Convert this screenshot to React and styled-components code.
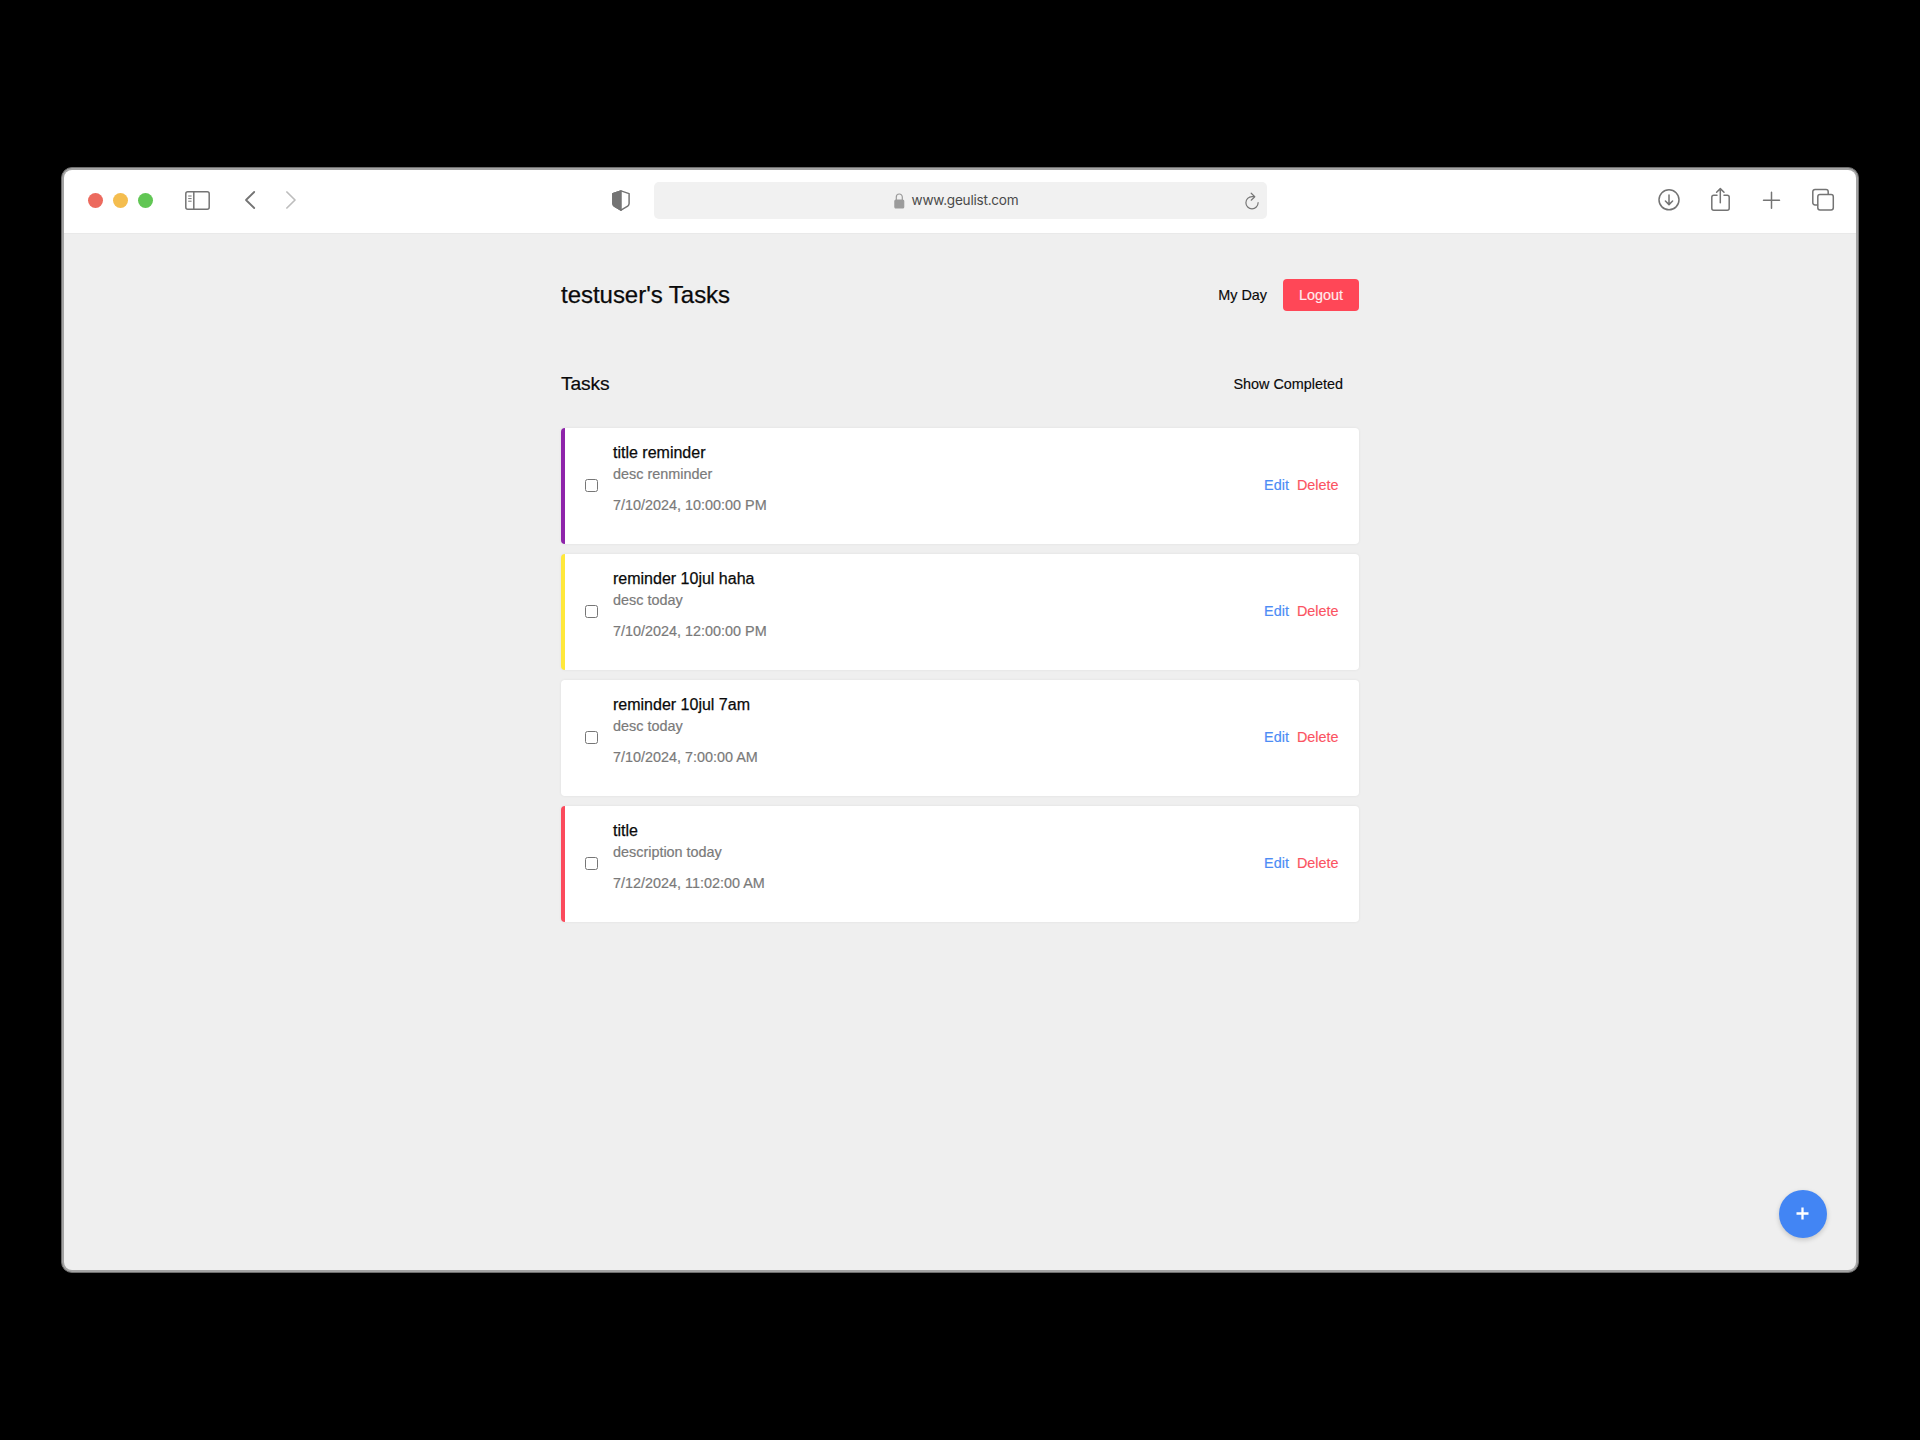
import React from "react";
import styled, { createGlobalStyle } from "styled-components";

const Global = createGlobalStyle`
  *, *::before, *::after { box-sizing: border-box; }
  html, body { margin: 0; background: #000; }
  body { font-family: "Liberation Sans", Arial, sans-serif; color: #0a0a0a; }
  h1, h2, h3, p { margin: 0; font-weight: 400; }
`;

const Desktop = styled.div`
  width: 1920px;
  height: 1440px;
  padding: 167px 61px 0;
  background: #000;
  overflow: hidden;
`;

const Window = styled.div`
  position: relative;
  height: 1106px;
  display: flex;
  flex-direction: column;
  border: 1px solid #6e6e6e;
  border-radius: 11px;
  overflow: hidden;
  background: #a3a3a3;
  padding: 2px;
`;

const Toolbar = styled.header`
  height: 63px;
  flex: none;
  display: grid;
  grid-template-columns: 1fr 613px 1fr;
  align-items: center;
  background: #fff;
  border-radius: 8px 8px 0 0;
  padding-bottom: 2px;
`;

const ToolGroup = styled.div`
  display: flex;
  align-items: center;
  justify-content: ${(p) => p.$justify || "flex-start"};
  padding-bottom: 1px;
`;

const Lights = styled.div`
  display: flex;
  gap: 10px;
  margin: 0 39px 0 24px;
`;

const Light = styled.span`
  width: 15px;
  height: 15px;
  border-radius: 50%;
  background: ${(p) => p.$color};
`;

const ToolIcon = styled.svg`
  display: block;
  flex: none;
  overflow: visible;
  fill: none;
  stroke: ${(p) => p.$color || "#747474"};
  stroke-width: ${(p) => p.$weight || 1.5};
  stroke-linecap: round;
  stroke-linejoin: round;
  margin-left: ${(p) => p.$left || 0}px;
  margin-right: ${(p) => p.$right || 0}px;
`;

const Address = styled.div`
  height: 37px;
  display: flex;
  align-items: center;
  padding: 0 8px 0 240px;
  border-radius: 5px;
  background: #f1f1f1;
`;

const Url = styled.span`
  flex: 1;
  margin-left: 7px;
  padding-bottom: 2px;
  font: 400 13.6px/20px Inter, sans-serif;
  letter-spacing: -0.24px;
  color: #4a4a4a;
`;

const Page = styled.main`
  flex: 1;
  background: #efefef;
  border-radius: 0 0 8px 8px;
  border-top: 1px solid #e9e9e9;
`;

const Container = styled.div`
  width: 798px;
  margin: 0 auto;
  padding-top: 45px;
`;

const Row = styled.div`
  display: flex;
  align-items: center;
  justify-content: space-between;
  height: 32px;
  margin-top: ${(p) => p.$top || 0}px;
`;

const Heading = styled.h1`
  font-size: 24px;
  line-height: 28px;
  letter-spacing: -0.03px;
  -webkit-text-stroke: 0.25px;
`;

const Subheading = styled.h2`
  font-size: 19.2px;
  line-height: 22px;
  letter-spacing: -0.1px;
  -webkit-text-stroke: 0.2px;
`;

const Nav = styled.nav`
  display: flex;
  align-items: center;
`;

const Button = styled.button`
  border: 0;
  padding: 0 ${(p) => p.$pad ?? 16}px;
  height: ${(p) => p.$height ?? 32}px;
  border-radius: 4px;
  background: ${(p) => p.$bg || "transparent"};
  color: ${(p) => p.$color || "#0a0a0a"};
  font: 14.4px/17px "Liberation Sans", Arial, sans-serif;
  -webkit-text-stroke: 0.15px;
`;

const List = styled.ul`
  list-style: none;
  width: 797.5px;
  margin: 28px 0 0;
  padding: 0;
  display: grid;
  gap: 10px;
`;

const Card = styled.li`
  height: 116px;
  display: flex;
  align-items: center;
  padding: 0 20px 1px 16px;
  border-left: 4px solid ${(p) => p.$accent};
  border-radius: 4px;
  background: #fff;
  box-shadow: 0 0 3px rgba(0, 0, 0, 0.07);
`;

const Check = styled.input`
  width: 13px;
  height: 13px;
  margin: 0 15.5px 0 3.5px;
`;

const Body = styled.div`
  flex: 1;
  align-self: flex-start;
  padding-top: 16px;
`;

const Title = styled.h3`
  font-size: 16px;
  line-height: 18px;
  -webkit-text-stroke: 0.25px;
`;

const Detail = styled.p`
  margin-top: ${(p) => p.$top}px;
  font-size: 14.4px;
  line-height: 17px;
  color: #7a7a7a;
  -webkit-text-stroke: 0.2px;
`;

const Actions = styled.div`
  display: flex;
  gap: 8px;
`;

const AddButton = styled.button`
  position: absolute;
  right: 31px;
  bottom: 34px;
  width: 48.5px;
  height: 48.5px;
  display: grid;
  place-items: center;
  padding: 0;
  border: 0;
  border-radius: 50%;
  background: #4285f4;
  box-shadow: 0 2px 5px rgba(0, 0, 0, 0.18);
`;

const tasks = [
  { title: "title reminder", text: "desc renminder", due: "7/10/2024, 10:00:00 PM", accent: "#8e24aa" },
  { title: "reminder 10jul haha", text: "desc today", due: "7/10/2024, 12:00:00 PM", accent: "#ffe83b" },
  { title: "reminder 10jul 7am", text: "desc today", due: "7/10/2024, 7:00:00 AM", accent: "#ffffff" },
  { title: "title", text: "description today", due: "7/12/2024, 11:02:00 AM", accent: "#fb4a5c" },
];

export default function App() {
  return (
    <Desktop>
      <Global />
      <Window>
        <Toolbar>
          <ToolGroup>
            <Lights>
              <Light $color="#ec6a5e" />
              <Light $color="#f4bd4f" />
              <Light $color="#61c654" />
            </Lights>
            <ToolIcon width="25" height="19" viewBox="0 0 25 19" $left={-7}>
              <rect x="0.8" y="0.8" width="23.4" height="17.4" rx="2" />
              <path d="M8.8 1v17" />
              <path d="M3.6 5h2.6M3.6 7.6h2.6M3.6 10.2h2.6" strokeWidth="1" />
            </ToolIcon>
            <ToolIcon width="10" height="18" viewBox="0 0 10 18" $left={35} $weight={1.8}>
              <path d="M9.2 1L1 9l8.2 8" />
            </ToolIcon>
            <ToolIcon width="10" height="18" viewBox="0 0 10 18" $left={31} $weight={1.7} $color="#bdbdbd">
              <path d="M0.9 1L9 9l-8.1 8" />
            </ToolIcon>
            <ToolIcon width="18" height="21" viewBox="0 0 18 21" $left={316}>
              <path d="M9 0.9L17.1 3.6V13.6Q17.1 15.2 15.7 16.2L9 20.2L2.3 16.2Q0.9 15.2 0.9 13.6V3.6z" />
              <path d="M9 0.9V20.2L2.3 16.2Q0.9 15.2 0.9 13.6V3.6z" fill="#747474" />
            </ToolIcon>
          </ToolGroup>
          <Address>
            <ToolIcon width="11" height="16" viewBox="0 0 11 16" $color="#9b9b9b" $weight={1.2}>
              <rect x="0.9" y="7" width="8.8" height="8" rx="1" fill="#9b9b9b" />
              <path d="M2.3 7V4a3 3 0 0 1 6 0V7" />
            </ToolIcon>
            <Url>www.geulist.com</Url>
            <ToolIcon width="14" height="18" viewBox="0 0 14 18" $weight={1.2} $color="#777">
              <path d="M9 4.6H7A6.1 6.1 0 1 0 13.1 10.7" />
              <path d="M6.2 1.2l3.6 3.5-3.6 3.5" />
            </ToolIcon>
          </Address>
          <ToolGroup $justify="flex-end">
            <ToolIcon width="22" height="22" viewBox="0 0 22 22" $right={31}>
              <circle cx="11" cy="10.8" r="10" />
              <path d="M11 6v9.5M7.4 12l3.6 3.6 3.6-3.6" />
            </ToolIcon>
            <ToolIcon width="19" height="24" viewBox="0 0 19 24" $right={33}>
              <path d="M6 7.3H2.8a2 2 0 0 0-2 2v10.9a2 2 0 0 0 2 2h13.4a2 2 0 0 0 2-2V9.3a2 2 0 0 0-2-2H13" />
              <path d="M9.3 14.7V0.7M5.6 4.3l3.7-3.7 3.7 3.7" />
            </ToolIcon>
            <ToolIcon width="17" height="17" viewBox="0 0 17 17" $right={32}>
              <path d="M8.5 0.2v16M0.5 8.2h16" />
            </ToolIcon>
            <ToolIcon width="22" height="22" viewBox="0 0 22 22" $right={22}>
              <rect x="5.8" y="5.5" width="15.5" height="15.5" rx="2.2" />
              <path d="M5.5 15.9H3a2.2 2.2 0 0 1-2.2-2.2V2.7A2.2 2.2 0 0 1 3 0.5h11A2.2 2.2 0 0 1 16.2 2.7v2.5" />
            </ToolIcon>
          </ToolGroup>
        </Toolbar>
        <Page>
          <Container>
            <Row>
              <Heading>testuser's Tasks</Heading>
              <Nav>
                <Button>My Day</Button>
                <Button $bg="#ff4757" $color="#ffecee">Logout</Button>
              </Nav>
            </Row>
            <Row $top={57}>
              <Subheading>Tasks</Subheading>
              <Button>Show Completed</Button>
            </Row>
            <List>
              {tasks.map((t) => (
                <Card key={t.title} $accent={t.accent}>
                  <Check type="checkbox" />
                  <Body>
                    <Title>{t.title}</Title>
                    <Detail $top={4}>{t.text}</Detail>
                    <Detail $top={14}>{t.due}</Detail>
                  </Body>
                  <Actions>
                    <Button $pad={0} $height={17} $color="#4c8cf5">Edit</Button>
                    <Button $pad={0} $height={17} $color="#fb5262">Delete</Button>
                  </Actions>
                </Card>
              ))}
            </List>
          </Container>
        </Page>
        <AddButton aria-label="Add task">
          <ToolIcon width="13" height="13" viewBox="0 0 13 13" $color="#fff" $weight={2.3}>
            <path d="M6.5 0.5v12M0.5 6.5h12" strokeLinecap="butt" />
          </ToolIcon>
        </AddButton>
      </Window>
    </Desktop>
  );
}
